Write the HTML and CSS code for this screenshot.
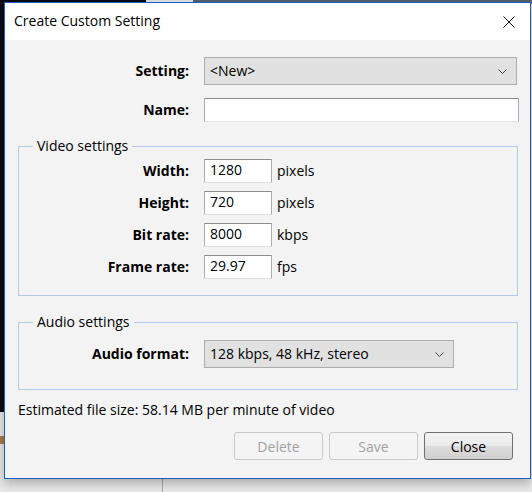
FILE: index.html
```html
<!DOCTYPE html>
<html lang="en">
<head>
<meta charset="utf-8">
<title>Create Custom Setting</title>
<link rel="stylesheet" href="styles.css">
</head>
<body>
<div class="desktop">
  <div class="bg bg-top-a"></div>
  <div class="bg bg-top-b"></div>
  <div class="bg bg-top-c"></div>
  <div class="bg bg-left"></div>
  <div class="bg bg-left-low"></div>
  <div class="bg bg-vline"></div>

  <section class="dialog">
    <header class="titlebar">
      <span class="title">Create Custom Setting</span>
      <span class="close-x" aria-label="Close">
        <svg width="12" height="12" viewBox="0 0 12 12"><path d="M0.5 0.5 L11.5 11.5 M11.5 0.5 L0.5 11.5" stroke="#111" stroke-width="1" fill="none"/></svg>
      </span>
    </header>

    <div class="content">
      <div class="form-grid top-grid">
        <span class="lbl">Setting:</span>
        <div class="combo combo-wide"><span>&lt;New&gt;</span>
          <svg class="chev" width="9" height="5" viewBox="0 0 9 5"><path d="M0.5 0.5 L4.5 4.5 L8.5 0.5" stroke="#444" stroke-width="1" fill="none"/></svg>
        </div>
        <span class="lbl">Name:</span>
        <div class="textbox textbox-wide"></div>
      </div>

      <fieldset class="group group-video">
        <legend>Video settings</legend>
        <div class="form-grid inner-grid">
          <span class="lbl">Width:</span>
          <div class="field"><div class="textbox num">1280</div><span class="unit">pixels</span></div>
          <span class="lbl">Height:</span>
          <div class="field"><div class="textbox num">720</div><span class="unit">pixels</span></div>
          <span class="lbl">Bit rate:</span>
          <div class="field"><div class="textbox num">8000</div><span class="unit">kbps</span></div>
          <span class="lbl">Frame rate:</span>
          <div class="field"><div class="textbox num">29.97</div><span class="unit">fps</span></div>
        </div>
      </fieldset>

      <fieldset class="group group-audio">
        <legend>Audio settings</legend>
        <div class="form-grid inner-grid">
          <span class="lbl">Audio format:</span>
          <div class="combo combo-audio"><span>128 kbps, 48 kHz, stereo</span>
            <svg class="chev" width="9" height="5" viewBox="0 0 9 5"><path d="M0.5 0.5 L4.5 4.5 L8.5 0.5" stroke="#444" stroke-width="1" fill="none"/></svg>
          </div>
        </div>
      </fieldset>

      <p class="estimate">Estimated file size: 58.14 MB per minute of video</p>

      <div class="buttons">
        <button class="btn" disabled>Delete</button>
        <button class="btn" disabled>Save</button>
        <button class="btn btn-active">Close</button>
      </div>
    </div>
  </section>
</div>
</body>
</html>
```
FILE: styles.css
```css
html, body {
  margin: 0;
  padding: 0;
}
body {
  width: 532px;
  height: 492px;
  overflow: hidden;
  font-family: "Open Sans", "Noto Sans", sans-serif;
  font-size: 14px;
  color: #000;
}
.desktop {
  position: relative;
  width: 532px;
  height: 492px;
  background: #e8e8e8;
  overflow: hidden;
}
.bg { position: absolute; }
.bg-top-a { left: 0; top: 0; width: 146px; height: 4px; background: #0b0b12; }
.bg-top-b { left: 146px; top: 0; width: 47px; height: 4px; background: #e4e6ea; }
.bg-top-c { left: 193px; top: 0; width: 339px; height: 4px; background: #56616c; }
.bg-left { left: 0; top: 0; width: 4px; height: 412px; background: #0a0a14; }
.bg-left-low { left: 0; top: 436px; width: 4px; height: 8px; background: #b07a4a; }
.bg-vline { left: 162px; top: 470px; width: 1px; height: 22px; background: #a8a8a8; }

.dialog {
  position: absolute;
  left: 4px;
  top: 2px;
  width: 527px;
  height: 477px;
  box-sizing: border-box;
  border: 1px solid #1c5fc4;
  background: #f3f3f3;
  box-shadow: 0 4px 10px rgba(0, 0, 0, 0.28);
  display: flex;
  flex-direction: column;
}

.titlebar {
  height: 37px;
  flex: none;
  background: #fff;
  display: flex;
  align-items: center;
  justify-content: space-between;
  padding: 0 15px 0 9px;
}
.title {
  font-size: 14px;
  line-height: 20px;
  padding-bottom: 1px;
}
.close-x {
  display: flex;
  width: 12px;
  height: 12px;
}

.content {
  flex: 1;
  display: flex;
  flex-direction: column;
  padding: 17px 17px 0 0;
}

.form-grid {
  display: grid;
  column-gap: 15px;
  align-items: center;
}
.top-grid {
  grid-template-columns: 184px auto;
  row-gap: 13px;
  justify-items: start;
}
.inner-grid {
  grid-template-columns: 170px auto;
  row-gap: 8px;
  justify-items: start;
}
.lbl {
  font-weight: bold;
  justify-self: end;
  line-height: 20px;
}

.combo {
  box-sizing: border-box;
  height: 28px;
  background: #e1e1e1;
  border: 1px solid #adadad;
  display: flex;
  align-items: center;
  justify-content: space-between;
  padding: 0 9px 0 5px;
  line-height: 20px;
}
.combo-wide { width: 313px; }
.combo-audio { width: 250px; }
.chev { flex: none; }

.textbox {
  box-sizing: border-box;
  height: 24px;
  background: #fff;
  border: 1px solid #abadb3;
  border-top-color: #8c8c8c;
  border-bottom-color: #e3e3e3;
  line-height: 20px;
  padding: 0 5px;
}
.textbox-wide { width: 315px; }
.num { width: 68px; }

.field {
  display: flex;
  align-items: center;
  gap: 5px;
}
.unit { line-height: 20px; }

.group {
  margin: 14px 0 0 13px;
  width: 500px;
  box-sizing: border-box;
  border: 1px solid #b5c9ea;
  padding: 3px 0 16px 0;
  min-width: 0;
}
.group legend {
  margin-left: 14px;
  padding: 0 4px;
  line-height: 20px;
  font-size: 14px;
}
.group-audio {
  margin-top: 16px;
  padding: 8px 0 21px 0;
}

.estimate {
  margin: 10px 0 0 13px;
  line-height: 20px;
}

.buttons {
  margin-top: 12px;
  display: flex;
  justify-content: flex-end;
  gap: 6px;
}
.btn {
  box-sizing: border-box;
  width: 89px;
  height: 28px;
  font-family: inherit;
  font-size: 14px;
  border-radius: 3px;
  border: 1px solid #c9c9c9;
  background: #f4f4f4;
  color: #a2a2a2;
  padding: 0;
}
.btn-active {
  border-color: #707070;
  color: #000;
  background: linear-gradient(#f2f2f2 0%, #ebebeb 50%, #dddddd 51%, #cfcfcf 100%);
}
```
